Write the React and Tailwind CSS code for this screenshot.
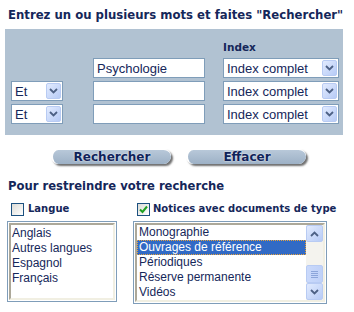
import React from 'react';

const navy = 'text-[#15275a]';

function Chevron({ up = false }) {
  return (
    <svg width="9" height="6" viewBox="0 0 9 6" className={up ? 'rotate-180' : ''}>
      <path d="M1 1 L4.5 4.5 L8 1" fill="none" stroke="#4d6185" strokeWidth="1.8" />
    </svg>
  );
}

function ArrowBtn({ up = false, className = '' }) {
  return (
    <div
      className={`flex items-center justify-center rounded-[2px] border border-[#b8cbf3] bg-gradient-to-br from-[#e2ebfe] to-[#b7cbf6] ${className}`}
    >
      <Chevron up={up} />
    </div>
  );
}

function Select({ value, width }) {
  return (
    <div
      className={`flex h-[20px] items-center justify-between border border-[#7f9db9] bg-white pl-[3px] pr-[1px] ${width}`}
    >
      <span className={`text-[13px] leading-none ${navy}`}>{value}</span>
      <ArrowBtn className="h-[16px] w-[15px]" />
    </div>
  );
}

function TextInput({ value = '' }) {
  return (
    <div className="flex h-[20px] w-[112px] items-center border border-[#7f9db9] bg-white pl-[3px]">
      <span className={`text-[13px] leading-none ${navy}`}>{value}</span>
    </div>
  );
}

function PillButton({ label }) {
  return (
    <div className="flex h-[15px] w-[120px] items-center justify-center rounded-[8px] border-l-2 border-t border-l-white border-t-white bg-gradient-to-b from-[#b8c8d9] to-[#9db1c6] shadow-[2px_2px_2px_#6f6f6f]">
      <span className="text-[12px] font-bold leading-none text-[#10235a] [text-shadow:0_0_2px_#ffffff]">
        {label}
      </span>
    </div>
  );
}

function Checkbox({ checked }) {
  return (
    <div className="flex h-[13px] w-[13px] shrink-0 items-center justify-center border border-[#1c5180] bg-gradient-to-br from-[#dcdcd7] to-[#ffffff]">
      {checked && (
        <svg width="9" height="9" viewBox="0 0 9 9">
          <path d="M1 4.5 L3.5 7 L8 1.5" fill="none" stroke="#21a121" strokeWidth="2" />
        </svg>
      )}
    </div>
  );
}

export default function App() {
  const langues = ['Anglais', 'Autres langues', 'Espagnol', 'Français'];
  const types = ['Monographie', 'Ouvrages de référence', 'Périodiques', 'Réserve permanente', 'Vidéos'];

  return (
    <div className="h-[312px] w-[354px] overflow-hidden bg-white font-['DejaVu_Sans',sans-serif]">
      <div className={`whitespace-nowrap pl-[8px] pt-[8px] text-[11.7px] font-bold leading-[15px] ${navy}`}>
        Entrez un ou plusieurs mots et faites "Rechercher"
      </div>

      {/* zone de recherche */}
      <div className="ml-[5px] mt-[6px] h-[106px] w-[338px] bg-[#b1c2d2] pl-[6px] pt-[11px] font-['Liberation_Sans',sans-serif]">
        <div className={`ml-[212px] h-[18px] font-['DejaVu_Sans',sans-serif] text-[10.5px] font-bold ${navy}`}>
          Index
        </div>
        <div className="flex flex-col gap-[3px]">
          <div className="flex items-center">
            <div className="w-[52px]" />
            <div className="ml-[30px]">
              <TextInput value="Psychologie" />
            </div>
            <div className="ml-[18px]">
              <Select value="Index complet" width="w-[116px]" />
            </div>
          </div>
          {[0, 1].map((i) => (
            <div key={i} className="flex items-center">
              <Select value="Et" width="w-[52px]" />
              <div className="ml-[30px]">
                <TextInput />
              </div>
              <div className="ml-[18px]">
                <Select value="Index complet" width="w-[116px]" />
              </div>
            </div>
          ))}
        </div>
      </div>

      {/* boutons */}
      <div className="mt-[14px] flex gap-[15px] pl-[51px]">
        <PillButton label="Rechercher" />
        <PillButton label="Effacer" />
      </div>

      <div className={`whitespace-nowrap pl-[8px] pt-[15px] text-[11.6px] font-bold leading-[15px] ${navy}`}>
        Pour restreindre votre recherche
      </div>

      {/* filtres */}
      <div className="mt-[8px] flex">
        <div className="flex flex-col pl-[7px]">
          <div className="flex h-[14px] items-center gap-[4px] pl-[4px]">
            <Checkbox />
            <span className={`whitespace-nowrap text-[10px] font-bold leading-none ${navy}`}>Langue</span>
          </div>
          <div className="mt-[5px] h-[81px] w-[110px] border border-[#7f9db9] p-[1px]">
            <div className="h-full w-full border-2 border-b-[#f1efe2] border-l-[#aca899] border-r-[#f1efe2] border-t-[#aca899] bg-white pt-[1px] font-['Liberation_Sans',sans-serif]">
              {langues.map((l) => (
                <div key={l} className={`pl-[1px] text-[12px] leading-[15px] ${navy}`}>
                  {l}
                </div>
              ))}
            </div>
          </div>
        </div>

        <div className="ml-[16px] flex flex-col">
          <div className="flex h-[14px] items-center gap-[3px] pl-[4px]">
            <Checkbox checked />
            <span className={`whitespace-nowrap text-[10px] font-bold leading-none ${navy}`}>
              Notices avec documents de type
            </span>
          </div>
          <div className="mt-[5px] h-[83px] w-[194px] border border-[#7f9db9] p-[1px]">
            <div className="flex h-full w-full border-2 border-b-[#f1efe2] border-l-[#aca899] border-r-[#f1efe2] border-t-[#aca899] bg-white font-['Liberation_Sans',sans-serif]">
              <div className="flex-1">
                {types.map((t, i) =>
                  i === 1 ? (
                    <div
                      key={t}
                      className="border border-dotted border-[#e8a33c] bg-[#316ac5] pl-[1px] text-[12px] leading-[13px] text-white"
                    >
                      {t}
                    </div>
                  ) : (
                    <div key={t} className={`pl-[2px] text-[12px] leading-[15px] ${navy}`}>
                      {t}
                    </div>
                  )
                )}
              </div>
              <div className="flex w-[17px] flex-col bg-[#f4f3ee]">
                <ArrowBtn up className="h-[17px] w-[17px]" />
                <div className="flex-1" />
                <div className="flex h-[18px] w-[17px] items-center justify-center rounded-[2px] border border-[#b8cbf3] bg-gradient-to-r from-[#cad9fb] to-[#bfd1f8]">
                  <div className="flex flex-col gap-[1px]">
                    <div className="h-px w-[7px] bg-[#8ca5da]" />
                    <div className="h-px w-[7px] bg-[#8ca5da]" />
                    <div className="h-px w-[7px] bg-[#8ca5da]" />
                    <div className="h-px w-[7px] bg-[#8ca5da]" />
                  </div>
                </div>
                <ArrowBtn className="h-[17px] w-[17px]" />
              </div>
            </div>
          </div>
        </div>
      </div>
    </div>
  );
}
